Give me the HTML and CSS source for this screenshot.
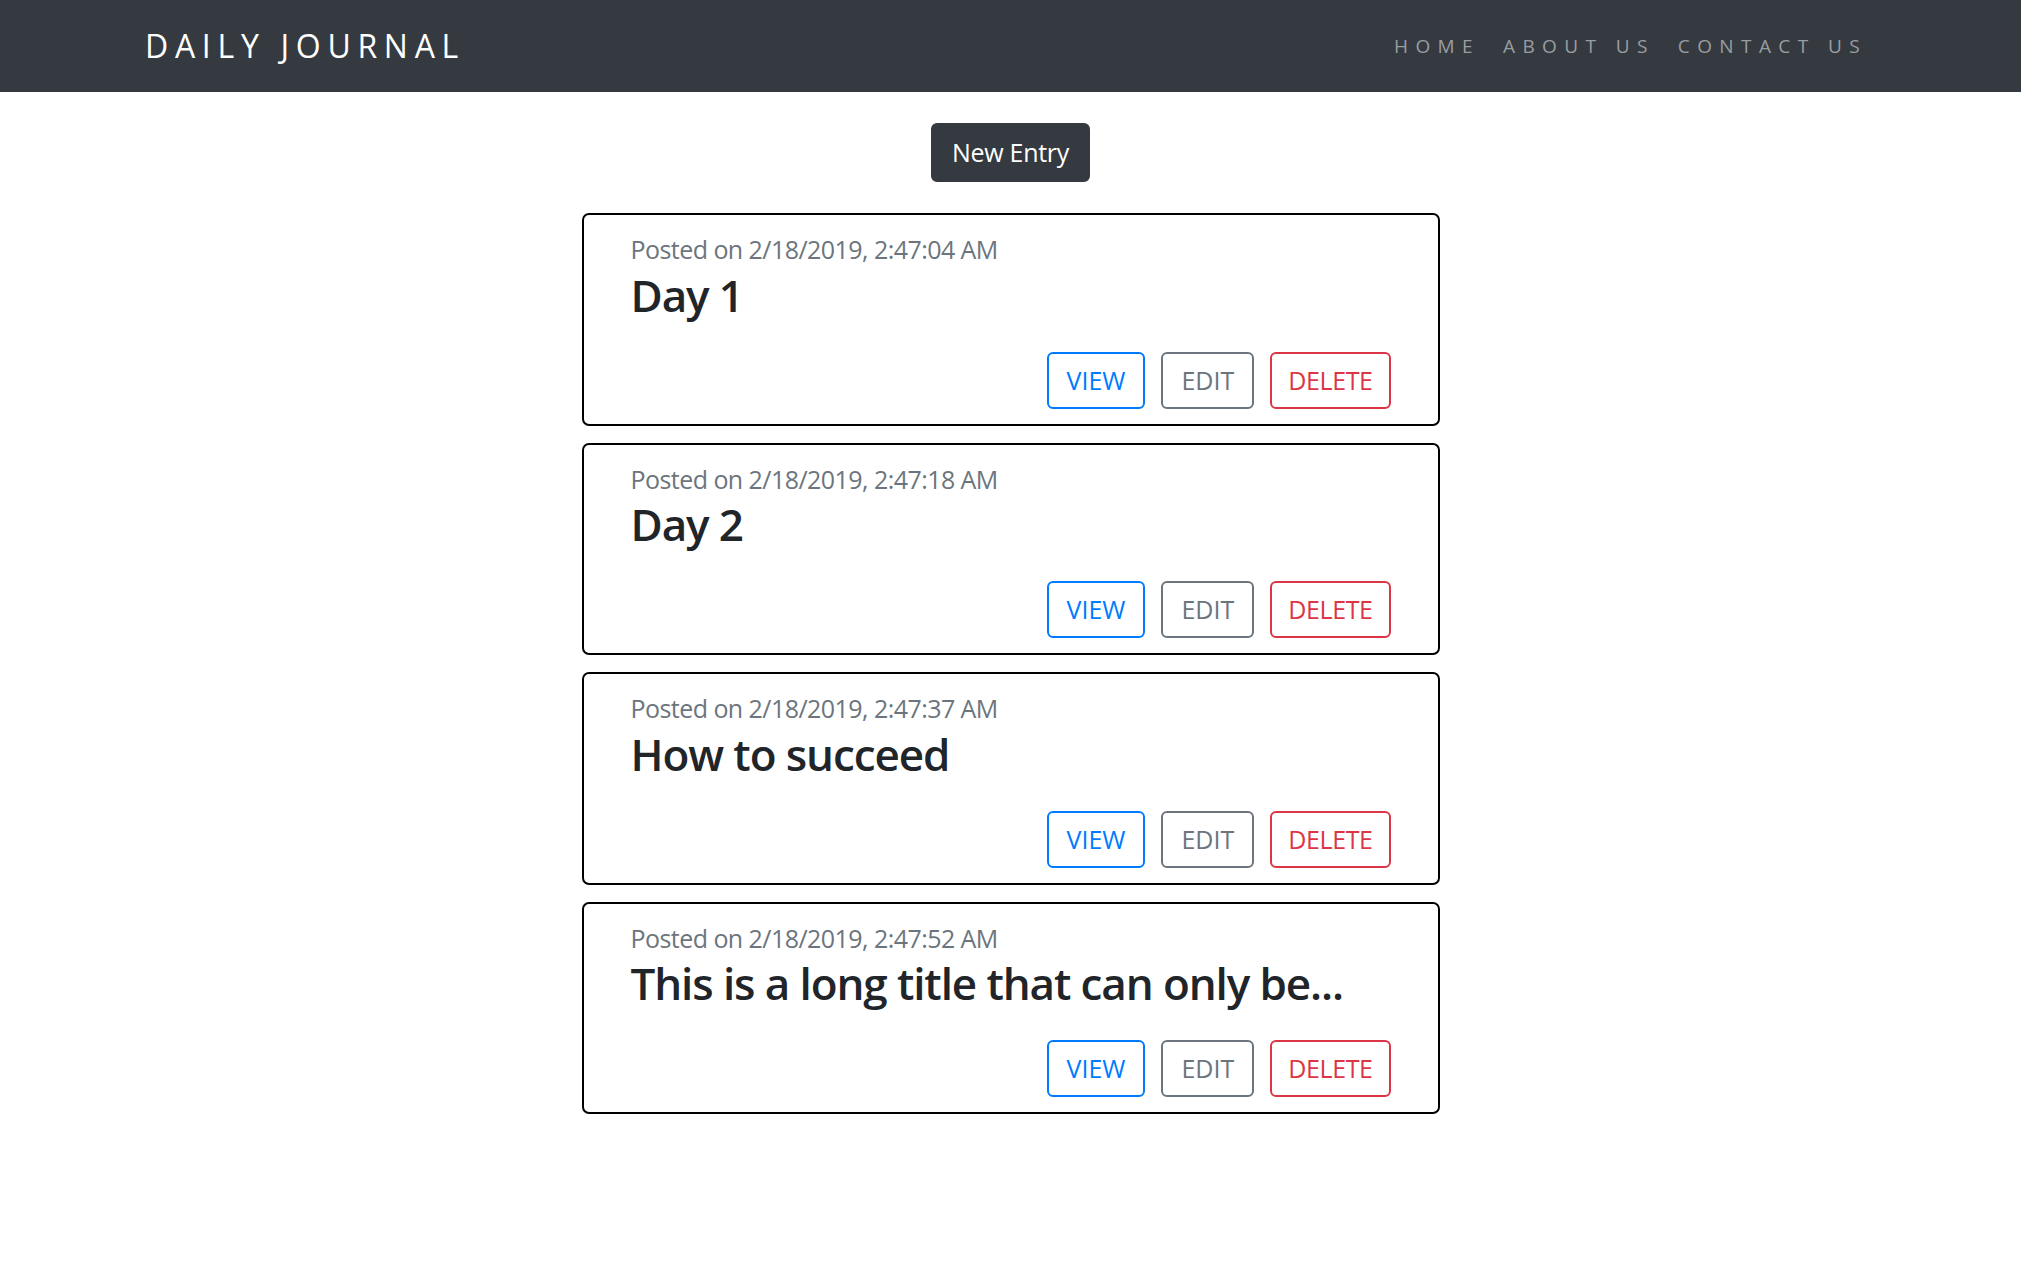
FILE: index.html
```html
<!DOCTYPE html>
<html lang="en">
<head>
<meta charset="utf-8">
<title>Daily Journal</title>
<link rel="stylesheet" href="styles.css">
</head>
<body>
<header class="navbar">
  <a class="brand" href="#">DAILY JOURNAL</a>
  <nav class="nav">
    <a class="nav-link" href="#">HOME</a>
    <a class="nav-link" href="#">ABOUT US</a>
    <a class="nav-link" href="#">CONTACT US</a>
  </nav>
</header>
<main class="main">
  <div class="toolbar">
    <button class="btn btn-dark" type="button">New Entry</button>
  </div>
  <section class="entries">
    <article class="card">
      <p class="meta">Posted on 2/18/2019, 2:47:04 AM</p>
      <h3 class="title">Day 1</h3>
      <div class="actions">
        <button class="btn btn-outline-primary" type="button">VIEW</button>
        <button class="btn btn-outline-secondary" type="button">EDIT</button>
        <button class="btn btn-outline-danger" type="button">DELETE</button>
      </div>
    </article>
    <article class="card">
      <p class="meta">Posted on 2/18/2019, 2:47:18 AM</p>
      <h3 class="title">Day 2</h3>
      <div class="actions">
        <button class="btn btn-outline-primary" type="button">VIEW</button>
        <button class="btn btn-outline-secondary" type="button">EDIT</button>
        <button class="btn btn-outline-danger" type="button">DELETE</button>
      </div>
    </article>
    <article class="card">
      <p class="meta">Posted on 2/18/2019, 2:47:37 AM</p>
      <h3 class="title">How to succeed</h3>
      <div class="actions">
        <button class="btn btn-outline-primary" type="button">VIEW</button>
        <button class="btn btn-outline-secondary" type="button">EDIT</button>
        <button class="btn btn-outline-danger" type="button">DELETE</button>
      </div>
    </article>
    <article class="card">
      <p class="meta">Posted on 2/18/2019, 2:47:52 AM</p>
      <h3 class="title">This is a long title that can only be...</h3>
      <div class="actions">
        <button class="btn btn-outline-primary" type="button">VIEW</button>
        <button class="btn btn-outline-secondary" type="button">EDIT</button>
        <button class="btn btn-outline-danger" type="button">DELETE</button>
      </div>
    </article>
  </section>
</main>
</body>
</html>
```
FILE: styles.css
```css
* { box-sizing: border-box; }

html, body {
  margin: 0;
  padding: 0;
  background: #fff;
}

body {
  font-family: "Open Sans", "Noto Sans", "DejaVu Sans", sans-serif;
  font-size: 25px;
  line-height: 1.5;
  color: #212529;
}

.navbar {
  height: 92px;
  background: #343a40;
  display: flex;
  align-items: center;
  justify-content: space-between;
  padding: 0 143px 0 145px;
}

.brand {
  color: #fff;
  text-decoration: none;
  font-size: 32px;
  letter-spacing: 6.7px;
  line-height: 1.5;
}

.nav {
  display: flex;
  align-items: center;
}

.nav-link {
  color: #9a9da0;
  text-decoration: none;
  font-size: 19px;
  letter-spacing: 7.4px;
  padding: 8px 11px 8px 12px;
}

.main {
  padding: 31px 0 40px;
}

.toolbar {
  display: flex;
  justify-content: center;
  margin-bottom: 31px;
}

.btn {
  font-family: inherit;
  font-size: 25px;
  line-height: 37px;
  padding: 9px 18px;
  border: 2px solid transparent;
  border-radius: 6px;
  background: #fff;
  cursor: pointer;
}

.btn-dark {
  background: #343a40;
  border-color: #343a40;
  color: #fff;
  padding: 9px 19px;
  letter-spacing: -0.3px;
}

.btn-outline-primary { color: #007bff; border-color: #007bff; }
.btn-outline-secondary { color: #6c757d; border-color: #6c757d; }
.btn-outline-danger { color: #dc3545; border-color: #dc3545; letter-spacing: -0.4px; }

.entries {
  width: 858px;
  margin: 0 auto;
  display: flex;
  flex-direction: column;
  gap: 17px;
}

.card {
  border: 2px solid #000;
  border-radius: 7px;
  padding: 16px 47px 15px;
}

.meta {
  margin: 0;
  color: #6c757d;
  line-height: 37.5px;
  letter-spacing: -0.55px;
}

.title {
  margin: 0 0 31px;
  font-size: 44px;
  font-weight: 600;
  line-height: 52px;
  letter-spacing: -1.1px;
  color: #212529;
}

.actions {
  display: flex;
  justify-content: flex-end;
  gap: 16px;
}

.actions .btn {
  padding: 8px 18px;
}

.actions .btn-outline-danger {
  padding: 8px 16px;
}
```
